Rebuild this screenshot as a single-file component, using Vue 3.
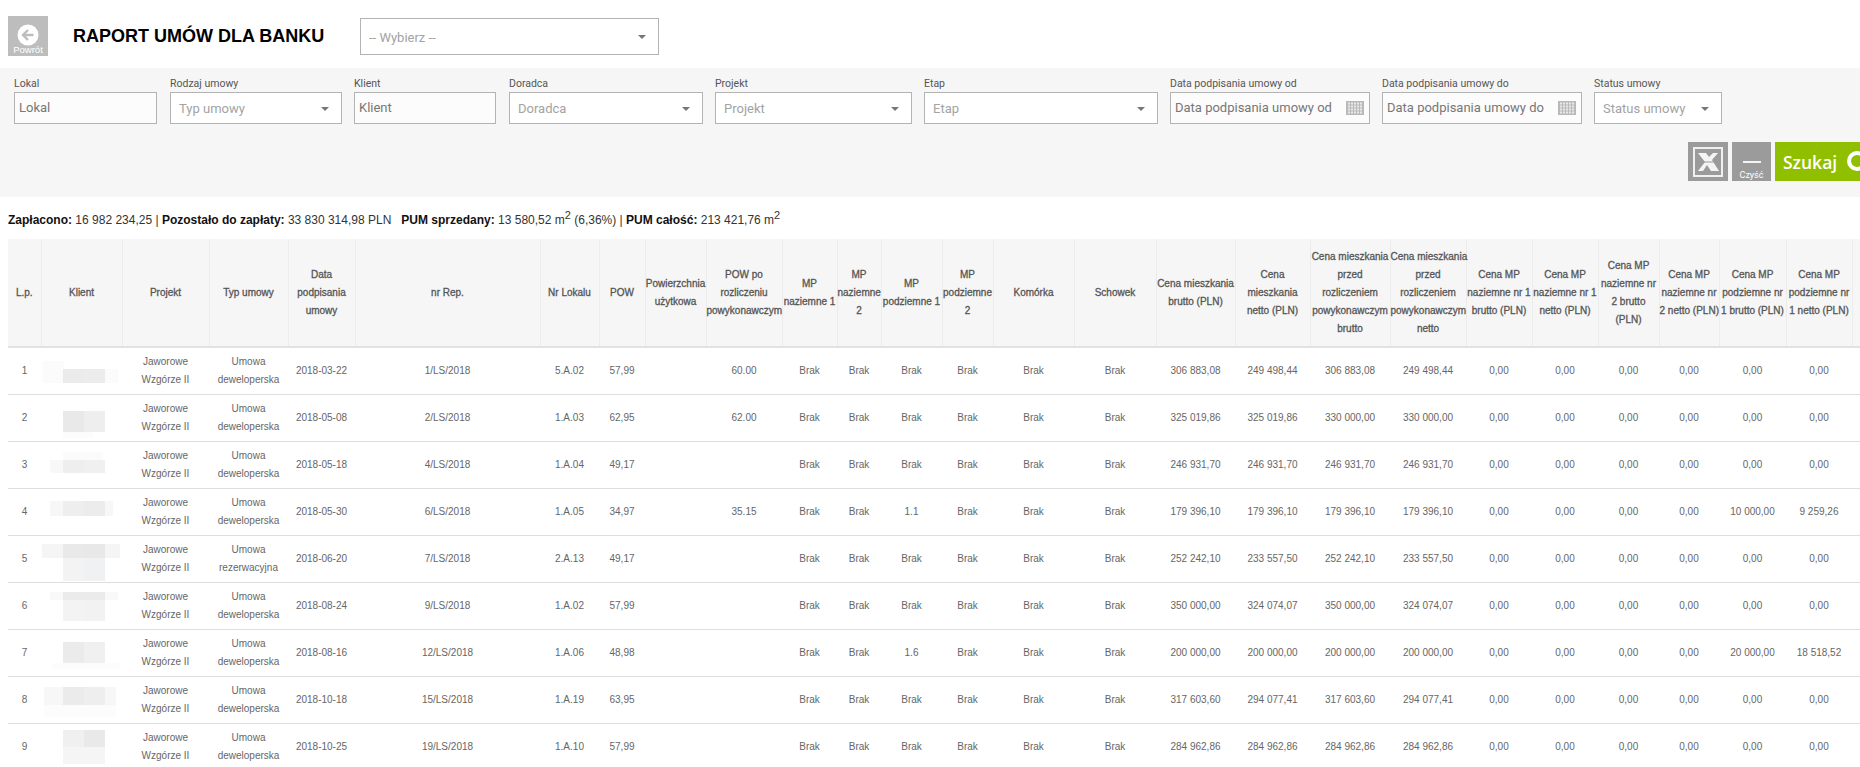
<script setup>
const filters = [
  { label: 'Lokal', ph: 'Lokal', w: 143, type: 'input' },
  { label: 'Rodzaj umowy', ph: 'Typ umowy', w: 172, gap: 13, type: 'select' },
  { label: 'Klient', ph: 'Klient', w: 142, gap: 12, type: 'input' },
  { label: 'Doradca', ph: 'Doradca', w: 194, gap: 13, type: 'select' },
  { label: 'Projekt', ph: 'Projekt', w: 197, gap: 12, type: 'select' },
  { label: 'Etap', ph: 'Etap', w: 234, gap: 12, type: 'select' },
  { label: 'Data podpisania umowy od', ph: 'Data podpisania umowy od', w: 200, gap: 12, type: 'date' },
  { label: 'Data podpisania umowy do', ph: 'Data podpisania umowy do', w: 200, gap: 12, type: 'date' },
  { label: 'Status umowy', ph: 'Status umowy', w: 128, gap: 12, type: 'select' },
]

const calDots = []
for (let r = 0; r < 4; r++) for (let c = 0; c < 5; c++) calDots.push({ x: 2 + c * 3, y: 1.5 + r * 3 })

const headers = [
  ['L.p.', 33], ['Klient', 81], ['Projekt', 87], ['Typ umowy', 79], ['Data\npodpisania\numowy', 67],
  ['nr Rep.', 185], ['Nr Lokalu', 59], ['POW', 46], ['Powierzchnia\nużytkowa', 61],
  ['POW po\nrozliczeniu\npowykonawczym', 76], ['MP\nnaziemne 1', 55], ['MP\nnaziemne\n2', 44],
  ['MP\npodziemne 1', 61], ['MP\npodziemne\n2', 51], ['Komórka', 81], ['Schowek', 82],
  ['Cena mieszkania\nbrutto (PLN)', 79], ['Cena\nmieszkania\nnetto (PLN)', 75],
  ['Cena mieszkania\nprzed\nrozliczeniem\npowykonawczym\nbrutto', 80],
  ['Cena mieszkania\nprzed\nrozliczeniem\npowykonawczym\nnetto', 76],
  ['Cena MP\nnaziemne nr 1\nbrutto (PLN)', 66], ['Cena MP\nnaziemne nr 1\nnetto (PLN)', 66],
  ['Cena MP\nnaziemne nr\n2 brutto\n(PLN)', 61], ['Cena MP\nnaziemne nr\n2 netto (PLN)', 60],
  ['Cena MP\npodziemne nr\n1 brutto (PLN)', 67], ['Cena MP\npodziemne nr\n1 netto (PLN)', 66],
  ['Cena komórki\nbrutto (PLN)', 78],
]
const tableWidth = headers.reduce((s, h) => s + h[1], 0)

const raw = [
  ['2018-03-22', '1/LS/2018', '5.A.02', '57,99', '60.00', '', ['306 883,08', '249 498,44', '306 883,08', '249 498,44'], '0,00', '0,00',
    [[2, 13, 21, 22, '#fbfbfb'], [22, 21, 21, 14, '#ebebeb'], [43, 21, 21, 14, '#ececec'], [64, 21, 13, 14, '#fbfbfb']]],
  ['2018-05-08', '2/LS/2018', '1.A.03', '62,95', '62.00', '', ['325 019,86', '325 019,86', '330 000,00', '330 000,00'], '0,00', '0,00',
    [[22, 16, 21, 21, '#e9e9e9'], [43, 16, 21, 21, '#eeeeee'], [22, 37, 30, 6, '#fcfcfc']]],
  ['2018-05-18', '4/LS/2018', '1.A.04', '49,17', '', '', ['246 931,70', '246 931,70', '246 931,70', '246 931,70'], '0,00', '0,00',
    [[9, 18, 13, 13, '#f8f8f8'], [22, 18, 21, 13, '#eeeeee'], [43, 18, 21, 13, '#f0f0f0'], [22, 10, 40, 8, '#fbfbfb']]],
  ['2018-05-30', '6/LS/2018', '1.A.05', '34,97', '35.15', '1.1', ['179 396,10', '179 396,10', '179 396,10', '179 396,10'], '10 000,00', '9 259,26',
    [[9, 12, 13, 15, '#f7f7f7'], [22, 12, 21, 15, '#eeeeee'], [43, 12, 21, 15, '#ececec'], [64, 12, 8, 15, '#f7f7f7']]],
  ['2018-06-20', '7/LS/2018', '2.A.13', '49,17', '', '', ['252 242,10', '233 557,50', '252 242,10', '233 557,50'], '0,00', '0,00',
    [[1, 8, 21, 14, '#f5f5f5'], [22, 8, 21, 14, '#e9e9e9'], [43, 8, 21, 14, '#e8e8e8'], [64, 8, 15, 14, '#f5f5f5'], [22, 22, 21, 23, '#f3f3f3'], [43, 22, 21, 23, '#f0f1f3']]],
  ['2018-08-24', '9/LS/2018', '1.A.02', '57,99', '', '', ['350 000,00', '324 074,07', '350 000,00', '324 074,07'], '0,00', '0,00',
    [[9, 9, 13, 8, '#f9f9f9'], [22, 9, 42, 8, '#ebebeb'], [64, 9, 13, 8, '#f9f9f9'], [22, 17, 21, 21, '#f3f3f3'], [43, 17, 21, 21, '#f2f2f2']]],
  ['2018-08-16', '12/LS/2018', '1.A.06', '48,98', '', '1.6', ['200 000,00', '200 000,00', '200 000,00', '200 000,00'], '20 000,00', '18 518,52',
    [[22, 12, 21, 21, '#ebebeb'], [43, 12, 21, 21, '#f0f0f0'], [11, 33, 68, 6, '#fcfcfc']]],
  ['2018-10-18', '15/LS/2018', '1.A.19', '63,95', '', '', ['317 603,60', '294 077,41', '317 603,60', '294 077,41'], '0,00', '0,00',
    [[3, 10, 19, 18, '#f7f7f7'], [22, 10, 21, 18, '#ebebeb'], [43, 10, 21, 18, '#eeeeee'], [64, 10, 11, 18, '#f7f7f7'], [3, 28, 72, 12, '#fcfcfc']]],
  ['2018-10-25', '19/LS/2018', '1.A.10', '57,99', '', '', ['284 962,86', '284 962,86', '284 962,86', '284 962,86'], '0,00', '0,00',
    [[22, 6, 21, 17, '#f0f0f0'], [43, 6, 21, 17, '#e9e9e9'], [22, 23, 42, 17, '#f5f5f5']]],
]

const rows = raw.map((r, i) => ({
  lp: i + 1,
  type: i === 4 ? 'rezerwacyjna' : 'deweloperska',
  date: r[0], rep: r[1], lok: r[2], pow: r[3], powu: '', powr: r[4],
  mp: ['Brak', 'Brak', r[5] || 'Brak', 'Brak', 'Brak', 'Brak'],
  prices: r[6],
  mpPrices: ['0,00', '0,00', '0,00', '0,00', r[7], r[8], '0,00'],
  blocks: r[9],
}))

const blockStyle = b => ({ left: b[0] + 'px', top: b[1] + 'px', width: b[2] + 'px', height: b[3] + 'px', background: b[4] })
</script>

<template>
  <div class="page">
    <header class="top">
      <button class="back">
        <svg class="back-icon" width="22" height="22" viewBox="0 0 22 22">
          <circle cx="11" cy="11" r="10.5" fill="#fff" />
          <path d="M16.5 11H6.5M11 6l-5 5 5 5" fill="none" stroke="#bdbdbd" stroke-width="2.4" />
        </svg>
        <span class="back-text">Powrót</span>
      </button>
      <h1 class="title">RAPORT UMÓW DLA BANKU</h1>
      <div class="select main-select">
        <span class="ph">-- Wybierz --</span>
        <i class="caret"></i>
      </div>
    </header>

    <section class="band">
      <div class="filters">
        <div v-for="f in filters" :key="f.label" class="field" :style="{ width: f.w + 'px', marginLeft: (f.gap || 0) + 'px' }">
          <label>{{ f.label }}</label>
          <div v-if="f.type === 'select'" class="select">
            <span class="ph">{{ f.ph }}</span>
            <i class="caret"></i>
          </div>
          <div v-else class="input">
            <span>{{ f.ph }}</span>
            <svg v-if="f.type === 'date'" class="cal" width="18" height="14" viewBox="0 0 18 14">
              <rect width="18" height="14" fill="#b9b9b9" />
              <rect v-for="(d, i) in calDots" :key="i" :x="d.x" :y="d.y" width="2" height="2" fill="#e9e9e9" />
            </svg>
          </div>
        </div>
      </div>
      <div class="actions">
        <button class="act excel">
          <svg width="30" height="30" viewBox="0 0 30 30">
            <rect x="1" y="1" width="28" height="28" fill="none" stroke="#f0f0f0" stroke-width="2" />
            <path d="M5 6h8l3 4 4-4h5l-6 7 7 11h-8l-4-6-4 6H5l7-9z" fill="#f4f4f4" />
            <path d="M5 15h18" stroke="#9b9b9b" stroke-width="1" />
          </svg>
        </button>
        <button class="act clear">
          <i class="dash"></i>
          <span>Czyść</span>
        </button>
        <button class="act search">
          <span>Szukaj</span>
          <svg width="24" height="24" viewBox="0 0 24 24">
            <circle cx="11" cy="11" r="8" fill="none" stroke="#fff" stroke-width="4" />
            <path d="M16 16l6 6" stroke="#fff" stroke-width="4" />
          </svg>
        </button>
      </div>
    </section>

    <p class="summary"><b>Zapłacono:</b> 16 982 234,25 | <b>Pozostało do zapłaty:</b> 33 830 314,98 PLN &nbsp; <b>PUM sprzedany:</b> 13 580,52 m<sup>2</sup> (6,36%) | <b>PUM całość:</b> 213 421,76 m<sup>2</sup></p>

    <div class="table-wrap">
      <table :style="{ width: tableWidth + 'px' }">
        <colgroup>
          <col v-for="h in headers" :key="h[0]" :style="{ width: h[1] + 'px' }" />
        </colgroup>
        <thead>
          <tr>
            <th v-for="h in headers" :key="h[0]">{{ h[0] }}</th>
          </tr>
        </thead>
        <tbody>
          <tr v-for="r in rows" :key="r.lp">
            <td>{{ r.lp }}</td>
            <td class="client">
              <i v-for="(b, i) in r.blocks" :key="i" class="blur" :style="blockStyle(b)"></i>
            </td>
            <td>Jaworowe<br />Wzgórze II</td>
            <td>Umowa<br />{{ r.type }}</td>
            <td>{{ r.date }}</td>
            <td>{{ r.rep }}</td>
            <td>{{ r.lok }}</td>
            <td>{{ r.pow }}</td>
            <td>{{ r.powu }}</td>
            <td>{{ r.powr }}</td>
            <td v-for="(m, i) in r.mp" :key="'m' + i">{{ m }}</td>
            <td v-for="(p, i) in r.prices" :key="'p' + i">{{ p }}</td>
            <td v-for="(p, i) in r.mpPrices" :key="'q' + i">{{ p }}</td>
          </tr>
        </tbody>
      </table>
    </div>
  </div>
</template>

<style>
html, body { margin: 0; height: 767px; overflow: hidden; background: #fff; }
</style>

<style scoped>
.page {
  width: 1860px;
  height: 767px;
  overflow: hidden;
  font-family: "Liberation Sans", Arial, sans-serif;
  color: #333;
}
button { border: 0; padding: 0; cursor: pointer; }

.top {
  height: 68px;
  display: flex;
  align-items: flex-start;
  box-sizing: border-box;
  padding: 16px 0 0 8px;
}
.back {
  width: 40px;
  height: 40px;
  background: #bdbdbd;
  color: #fff;
  display: flex;
  flex-direction: column;
  align-items: center;
  padding-top: 8px;
  box-sizing: border-box;
  font: 9.5px/10px "Liberation Sans", Arial, sans-serif;
}
.back-icon { display: block; flex: none; }
.back-text { margin-top: -1px; }
.title {
  margin: 9px 0 0 25px;
  width: 287px;
  font-size: 18px;
  line-height: 22px;
  font-weight: bold;
  color: #000;
  white-space: nowrap;
}
.select, .input {
  box-sizing: border-box;
  height: 32px;
  background: #fff;
  border: 1px solid #b3b3b3;
  display: flex;
  align-items: center;
  font-family: Roboto, sans-serif;
  font-size: 13px;
  white-space: nowrap;
}
.select { padding: 1px 12px 0 8px; justify-content: space-between; }
.input { padding: 0 5px 2px 4px; justify-content: space-between; color: #777; background: #fcfcfc; }
.main-select { width: 299px; height: 37px; margin-top: 2px; }
.ph { color: #a3a3a3; }
.caret {
  width: 0;
  height: 0;
  border-left: 4px solid transparent;
  border-right: 4px solid transparent;
  border-top: 4px solid #777;
}

.band {
  height: 129px;
  background: #f6f6f6;
  box-sizing: border-box;
  padding: 9px 0 0 14px;
}
.filters { display: flex; }
.field label {
  display: block;
  height: 15px;
  font-family: Roboto, sans-serif;
  font-size: 10.5px;
  line-height: 13px;
  color: #555;
  white-space: nowrap;
}
.cal { flex: none; margin-top: 2px; }
.actions {
  display: flex;
  justify-content: flex-end;
  gap: 4px;
  margin-top: 18px;
  margin-right: -20px;
  align-items: flex-start;
}
.act {
  height: 39px;
  color: #fff;
  display: flex;
  align-items: center;
  justify-content: center;
}
.excel { width: 40px; background: #9b9b9b; }
.excel svg { display: block; }
.clear {
  width: 39px;
  background: #9b9b9b;
  flex-direction: column;
  justify-content: flex-start;
  font: 9px/10px Roboto, sans-serif;
}
.dash { display: block; width: 18px; height: 2px; background: #f4f4f4; margin: 19px 0 7px; }
.search {
  width: 105px;
  background: #90bf00;
  font: 600 17.5px "Open Sans", sans-serif;
  justify-content: flex-start;
  padding: 0 0 0 8px;
  box-sizing: border-box;
  gap: 9px;
}
.search svg { flex: none; }

.summary {
  margin: 0;
  height: 42px;
  box-sizing: border-box;
  padding: 14px 0 0 8px;
  font-size: 12px;
  line-height: 18px;
  color: #333;
  white-space: nowrap;
}
.summary b { color: #111; }
.summary sup { font-size: 11px; line-height: 0; }

.table-wrap { margin-left: 8px; width: 1852px; overflow: hidden; }
table {
  border-collapse: collapse;
  table-layout: fixed;
  font-size: 10px;
  line-height: 18px;
  color: #666;
}
th {
  height: 108px;
  box-sizing: border-box;
  padding: 0;
  background: #f6f6f6;
  color: #555;
  font-weight: normal;
  -webkit-text-stroke: 0.3px #555;
  white-space: pre;
  text-align: center;
  vertical-align: middle;
  border-left: 1px solid #ececec;
  border-bottom: 2px solid #e2e2e2;
}
th:first-child { border-left: 0; }
td {
  height: 47px;
  box-sizing: border-box;
  padding: 0;
  text-align: center;
  vertical-align: middle;
  white-space: nowrap;
  border-bottom: 1px solid #dedede;
}
.client { position: relative; }
.blur { position: absolute; display: block; }
</style>
